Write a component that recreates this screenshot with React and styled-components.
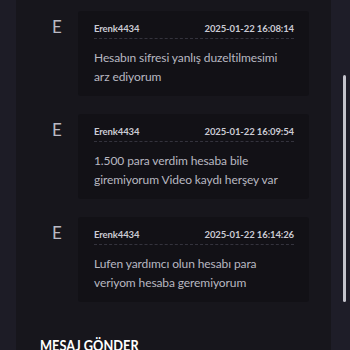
import React from 'react';
import styled, { createGlobalStyle } from 'styled-components';

const GlobalStyle = createGlobalStyle`
  html, body {
    margin: 0;
    padding: 0;
    background: #1d1c26;
    font-family: 'Lato', 'Noto Sans', sans-serif;
    overflow: hidden;
  }
`;

const Page = styled.div`
  display: flex;
  height: 350px;
  padding-left: 16px;
  overflow: hidden;
`;

const Panel = styled.div`
  width: 315px;
  flex-shrink: 0;
  background: #17161c;
  padding-top: 11px;
  box-sizing: border-box;
`;

const List = styled.div`
  display: flex;
  flex-direction: column;
  gap: 18px;
`;

const Row = styled.div`
  display: flex;
  align-items: flex-start;
`;

const Avatar = styled.div`
  width: 62px;
  padding-left: 36px;
  box-sizing: border-box;
  margin-top: 6px;
  font-size: 17px;
  line-height: 20px;
  color: #b9b9c4;
`;

const Bubble = styled.div`
  width: 231px;
  height: 85px;
  box-sizing: border-box;
  background: #121116;
  border-radius: 3px;
  padding: 10px 15px 10px 16px;
`;

const Header = styled.div`
  display: flex;
  justify-content: space-between;
  height: 16px;
  line-height: 16px;
  padding-bottom: 1px;
  border-bottom: 1px dashed #34333d;
  font-size: 9.5px;
  font-weight: 700;
  letter-spacing: -0.1px;
  color: #cbcbd4;
`;

const Text = styled.div`
  margin-top: 9px;
  font-size: 12px;
  line-height: 19px;
  letter-spacing: -0.1px;
  color: #b8b8c1;
`;

const Title = styled.h2`
  margin: 33px 0 0 24px;
  font-size: 16px;
  font-weight: 700;
  color: #ffffff;
  transform: scaleX(0.8);
  transform-origin: left center;
  white-space: nowrap;
`;

const ScrollArea = styled.div`
  flex: 1;
  background: #1e1d28;
  display: flex;
  justify-content: flex-end;
  padding-right: 4px;
`;

const Thumb = styled.div`
  width: 3px;
  height: 227px;
  margin-top: 75px;
  border-radius: 2px;
  background: #c4c4cc;
`;

const messages = [
  { user: 'Erenk4434', time: '2025-01-22 16:08:14', text: 'Hesabın sifresi yanlış duzeltilmesimi arz ediyorum' },
  { user: 'Erenk4434', time: '2025-01-22 16:09:54', text: '1.500 para verdim hesaba bile giremiyorum Video kaydı herşey var' },
  { user: 'Erenk4434', time: '2025-01-22 16:14:26', text: 'Lufen yardımcı olun hesabı para veriyom hesaba geremiyorum' },
];

export default function App() {
  return (
    <>
      <GlobalStyle />
      <Page>
        <Panel>
          <List>
            {messages.map((m, i) => (
              <Row key={i}>
                <Avatar>E</Avatar>
                <Bubble>
                  <Header>
                    <span>{m.user}</span>
                    <span>{m.time}</span>
                  </Header>
                  <Text>{m.text}</Text>
                </Bubble>
              </Row>
            ))}
          </List>
          <Title>MESAJ GÖNDER</Title>
        </Panel>
        <ScrollArea>
          <Thumb />
        </ScrollArea>
      </Page>
    </>
  );
}
